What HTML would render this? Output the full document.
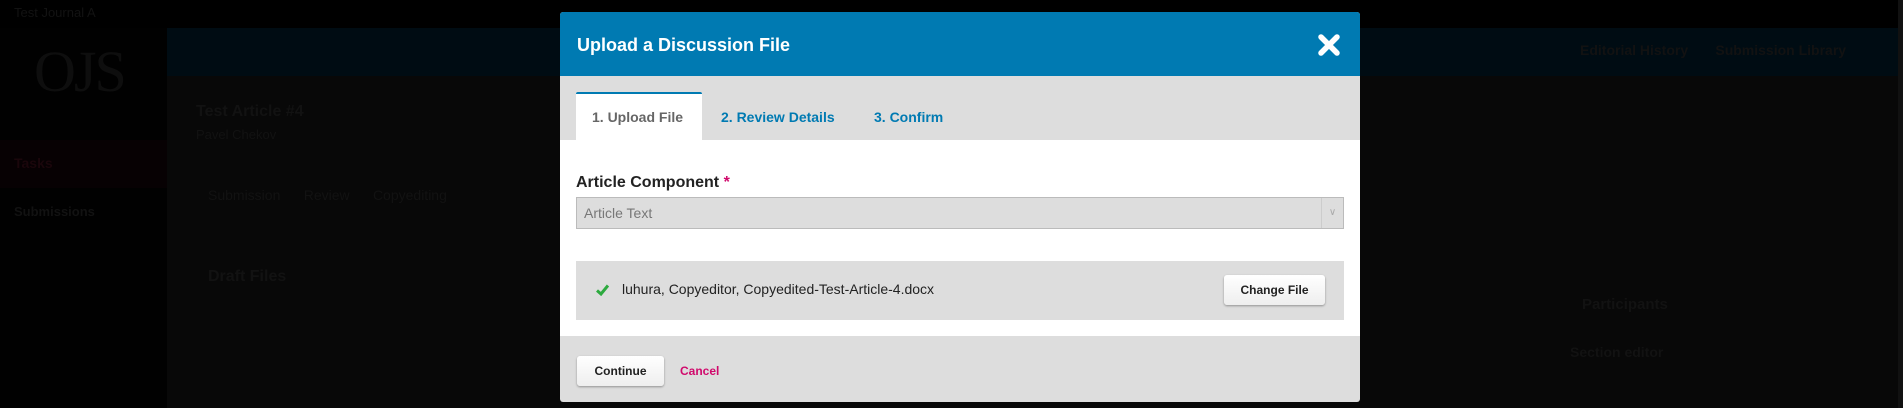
<!DOCTYPE html>
<html><head><meta charset="utf-8"><style>
*{margin:0;padding:0;box-sizing:border-box}
body{width:1903px;height:408px;overflow:hidden;background:#080808;font-family:"Liberation Sans",sans-serif;position:relative}
.a{position:absolute}
.dim{color:#121212;font-weight:bold}
</style></head><body>
<div class="a" style="left:0;top:0;width:1903px;height:28px;background:#000"></div>
<div class="a" style="left:0;top:28px;width:167px;height:380px;background:#010101"></div>
<div class="a" style="left:167px;top:28px;width:1733px;height:48px;background:#000c13"></div>
<div class="a" style="left:0;top:140px;width:167px;height:48px;background:#070103"></div>
<div class="a" style="left:1898px;top:0;width:5px;height:408px;background:#111"></div>
<div class="a dim" style="left:14px;top:5px;font-size:13px;font-weight:normal">Test Journal A</div>
<div class="a" style="left:34px;top:38px;font-family:'Liberation Serif',serif;font-size:58px;color:#0e0e0e;letter-spacing:-2px">OJS</div>
<div class="a dim" style="left:14px;top:155px;font-size:14px;color:#1a060b">Tasks</div>
<div class="a dim" style="left:14px;top:204px;font-size:13px">Submissions</div>
<div class="a dim" style="left:196px;top:103px;font-size:16px">Test Article #4</div>
<div class="a dim" style="left:196px;top:127px;font-size:13px;font-weight:normal">Pavel Chekov</div>
<div class="a dim" style="left:208px;top:187px;font-size:14px;font-weight:normal">Submission &nbsp;&nbsp;&nbsp;&nbsp; Review &nbsp;&nbsp;&nbsp;&nbsp; Copyediting</div>
<div class="a dim" style="left:208px;top:268px;font-size:16px">Draft Files</div>
<div class="a dim" style="left:1582px;top:296px;font-size:15px">Participants</div>
<div class="a dim" style="left:1570px;top:344px;font-size:14px">Section editor</div>
<div class="a dim" style="left:1580px;top:42px;font-size:14px">Editorial History &nbsp;&nbsp;&nbsp;&nbsp;&nbsp; Submission Library</div>

<!-- modal -->
<div class="a" style="left:560px;top:12px;width:800px;height:390px;background:#ddd;border-radius:3px;overflow:hidden">
  <div class="a" style="left:0;top:0;width:800px;height:64px;background:#007ab2"></div>
  <div class="a" style="left:17px;top:23px;color:#fff;font-weight:bold;font-size:18px">Upload a Discussion File</div>
  <svg class="a" style="left:757px;top:21px" width="24" height="24" viewBox="0 0 24 24"><path d="M4 4L20 20M20 4L4 20" stroke="#fff" stroke-width="5.5" stroke-linecap="round"/></svg>
  <div class="a" style="left:16px;top:80px;width:126px;height:48px;background:#fff;border-top:2px solid #007ab2;border-radius:2px 2px 0 0"></div>
  <div class="a" style="left:32px;top:97px;font-size:14px;font-weight:bold;color:#666">1. Upload File</div>
  <div class="a" style="left:161px;top:97px;font-size:14px;font-weight:bold;color:#007ab2">2. Review Details</div>
  <div class="a" style="left:314px;top:97px;font-size:14px;font-weight:bold;color:#007ab2">3. Confirm</div>
  <div class="a" style="left:0;top:128px;width:800px;height:196px;background:#fff"></div>
  <div class="a" style="left:16px;top:162px;font-size:16px;font-weight:bold;color:#222">Article Component <span style="color:#d00a6c">*</span></div>
  <div class="a" style="left:16px;top:185px;width:768px;height:32px;background:#ddd;border:1px solid #bbb"></div>
  <div class="a" style="left:761px;top:186px;width:22px;height:30px;border-left:1px solid #ccc;color:#aaa;font-size:10px;text-align:center;line-height:30px">&#8744;</div>
  <div class="a" style="left:24px;top:193px;font-size:14px;color:#777">Article Text</div>
  <div class="a" style="left:16px;top:249px;width:768px;height:59px;background:#ddd"></div>
  <svg class="a" style="left:36px;top:272px" width="13" height="12" viewBox="0 0 13 12"><path d="M1 6.5L5 10L12 1.5" stroke="#2daa3f" stroke-width="3" fill="none"/></svg>
  <div class="a" style="left:62px;top:269px;font-size:14px;color:#222">luhura, Copyeditor, Copyedited-Test-Article-4.docx</div>
  <div class="a" style="left:664px;top:263px;width:101px;height:30px;background:linear-gradient(#fff,#eee);border-radius:3px;box-shadow:0 1px 2px rgba(0,0,0,.35);font-size:12px;font-weight:bold;color:#222;text-align:center;line-height:30px">Change File</div>
  <div class="a" style="left:17px;top:344px;width:87px;height:30px;background:linear-gradient(#fff,#eee);border-radius:3px;box-shadow:0 1px 2px rgba(0,0,0,.35);font-size:12px;font-weight:bold;color:#222;text-align:center;line-height:30px">Continue</div>
  <div class="a" style="left:120px;top:352px;font-size:12px;font-weight:bold;color:#d00a6c">Cancel</div>
</div>
</body></html>
